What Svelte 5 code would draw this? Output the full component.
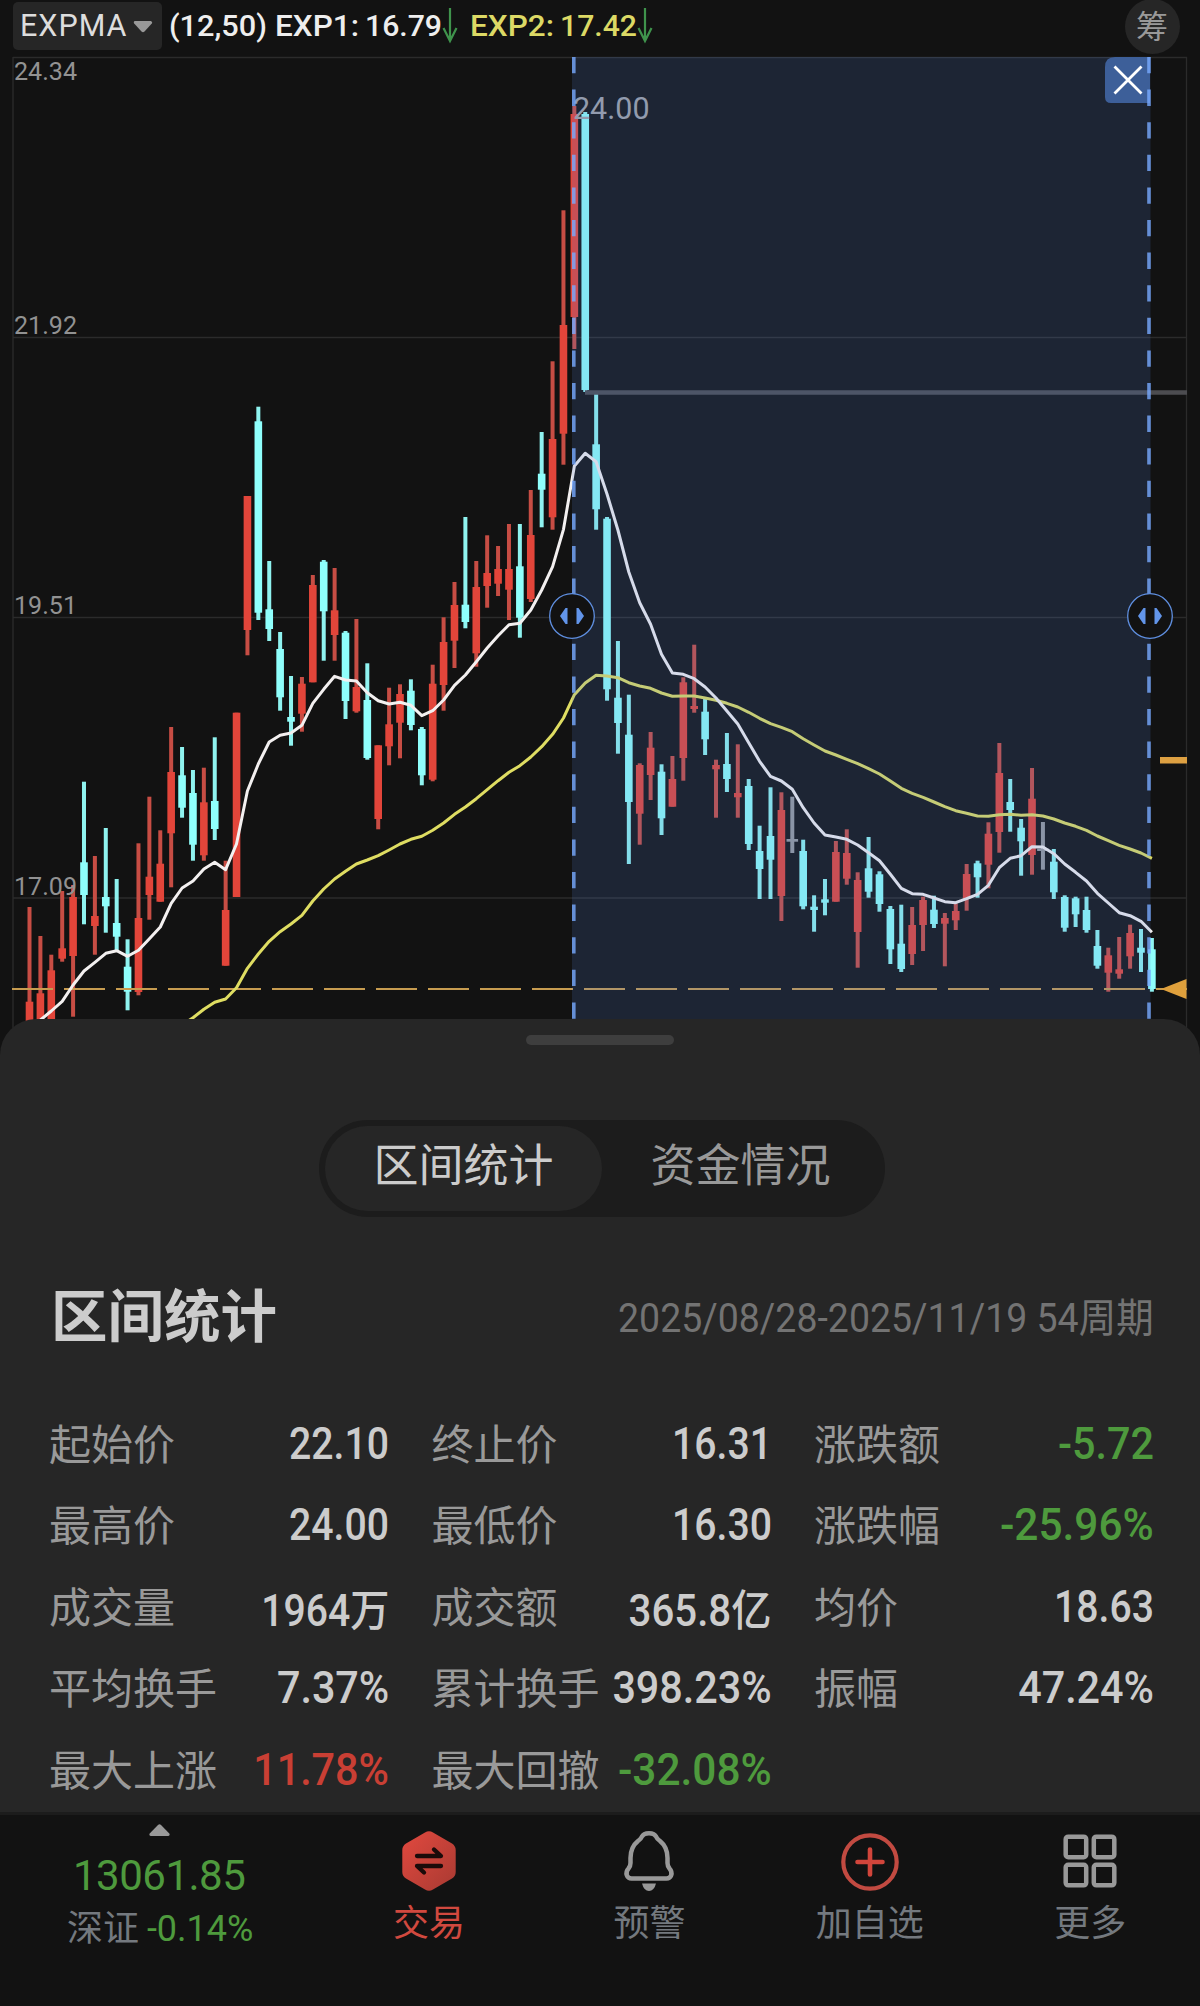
<script>
  // Candles: [kind, high, bodyTop, bodyBottom, low] in chart pixels.
  const candles = [
    ['r',907,1001.7,1040,1040],['r',936,993.3,1040,1040],['r',954.7,970.3,1040,1040],['r',891,948.3,958.7,961.7],['r',885,897,956,1016.7],
    ['c',781.7,862.3,895,924.3],['r',856,916,926,954.7],['c',828,897,906.3,932.7],['c',879,923,936.7,951],['c',939.3,966.7,991.7,1010.3],
    ['r',843.3,918,992,995.3],['r',796.7,876.7,895,919.7],['r',830.3,863.7,901.7,901.7],['r',727,772,833.3,887.3],['c',747,775.3,807.7,817.7],
    ['c',770,793,844.7,860.7],['r',767.7,802.3,855.3,860.7],['c',737.3,801,829,840],['r',860.7,910,965.7,965.7],['r',712.7,712.7,897,897],
    ['r',496,496,630,655.3],['c',406.7,421.3,612.7,620],['c',561,609.3,629,641],['c',632,649,697.3,710.7],['c',676,717,721.7,745.7],
    ['r',677,683.7,713.7,731.7],['r',575,585,682.3,682.3],['c',560,561.7,611.3,660.7],['r',568,610.3,635,660.7],['c',631,632.7,701,719],
    ['r',619,687,711.3,712.7],['c',663.3,700,758,759.7],['r',745.3,745.3,819,829.3],['r',687.7,724.3,746.3,765.3],['r',684.3,694,722.7,758.3],
    ['c',679.3,690.7,725,730.3],['c',727,729,775.3,785.3],['r',664.7,683.7,779.7,781.3],['r',617.3,642,685,710.7],['r',582,605,640.7,668],
    ['c',517,604.7,622,628.3],['r',561,587,653.3,666.7],['r',535.3,573,586,607.7],['r',546,569,583.7,596],['r',524,569,589.7,620],
    ['c',524,566.3,617.7,637.7],['r',490,535,599,602],['c',432,473.7,489.7,527.3],['r',361.3,439,517.3,529.7],['r',210.3,325,433.7,464.7],
    ['r',106,114,317,349],['c',112,114,390,392],['c',392.7,444.3,509.3,529.7],['c',517,518.7,689.3,700.7],['c',641,697.7,723,753.7],
    ['c',694.7,734.7,802,864],['r',763.3,765,813.7,844.7],['r',732,747.7,775,800],['c',764.3,771.7,818.3,835],['r',756,779,806.7,806.7],
    ['r',677.3,682.3,758,780.7],['r',644.7,706,709,712.7],['c',699,711.7,739.3,755],['r',759.7,765,769.3,817.7],['c',733,764,779,792],
    ['r',744.3,793,797.3,817.7],['c',779,786,844,850],['c',825.7,851,869,899],['c',787.3,836,859.7,899],['r',792.3,810,896,921],
    ['g',796.7,839,841.7,853],['c',839.7,851,906.3,909.3],['c',895.3,906.7,910,931.7],['c',879,899.3,902.7,915.3],['r',841,852,901.7,901.7],
    ['r',829.3,853,878.7,884.7],['r',872.3,880,932,967.7],['c',837,868.3,891.7,897.7],['c',871.3,874.3,904,911.7],['c',906,909,949.3,964],
    ['c',904.7,943.7,969,972],['r',907,925,954,965],['r',896.7,900,925,951],['c',895.7,909.7,924,928],['r',913,918,923.7,966.3],
    ['r',903.3,911,920.3,930],['r',864,874,899,910.7],['c',860.7,863.3,877.3,897.7],['r',822.3,833.7,864.7,888.3],['r',743,773,832,852.7],
    ['c',779,802,810,831.7],['c',819,827.7,841.3,875.7],['r',768,798.7,855,874.7],['g',822,848.7,851,869.7],['c',849,861.7,892.3,899],
    ['c',895.3,897,927.7,931.7],['c',896.7,898.3,914.3,927],['c',896.7,910,930,932.7],['c',930,946,965.7,968.7],['r',947.7,955.3,972.7,991.7],
    ['r',937,969.3,973.7,978.7],['r',924.7,933,956.3,968.7],['c',929,947.7,952.7,972],['c',938,949.3,989,991.7]
  ];
  const exp1 = [1028,1020,1011,1001.3,985,971,962.3,953.3,950.7,956.3,950.3,938.7,927,903.3,888,881,869,862.3,869.7,844,791,764,742,735.3,733,725.3,703.3,689.3,676.3,680,681,692.7,700.7,704,702.3,705.3,715.7,710.7,700,685.3,675,661.7,648,635.7,624.7,623.3,610,590,566.7,529.3,466,453.3,461.7,494,530,572,602.7,624.3,654.3,673,674.3,678.7,687,698,711,724,742.7,761.3,776.3,781,789.3,807.7,823,835,837,839.3,845,852.7,860.7,874.3,888.3,893.7,894.3,898,901.7,902.7,898.7,894.3,885.3,867.7,858.3,855.7,846.7,847,853.7,864,872.3,881,893.3,903,912.7,915.7,921.3,932.3];
  const exp2 = [1025,1017.7,1009.3,1002.3,999,987.7,968.3,954,941.3,931.7,924,915.3,901,889,879,871.3,864,860,855.7,850,844,839.3,836.3,830.3,823,814.3,807,798.7,789.7,780.7,772.3,765.7,757,746.7,734.3,718,694.7,683,675.3,676,677.7,682.7,686,688.3,693,696.3,696,696,698,700.3,703.3,707,712.3,718.3,723.7,727.3,731.7,738.7,745,751,755,759.3,763.7,768.7,774,781,788.3,793.3,797.3,802,806.7,810.7,813.3,816,816.3,814.7,814.3,815.3,814.7,816,819,823,826.3,830.3,836,840.7,845.3,849,853,858.3];
  const cx = (i) => 29.5 + i * 10.897;
  const line = (ys, from) => ys.map((y, i) => `${cx(i + from).toFixed(1)},${y}`).join(' ');
  const axis = [['24.34', 79.8], ['21.92', 333.5], ['19.51', 613.5], ['17.09', 894.5]];
  const grid = [57.5, 337.5, 617.5, 898];
  const handles = [572, 1150];

  const stats = [
    ['起始价','22.10',''],['终止价','16.31',''],['涨跌额','-5.72','down pct'],
    ['最高价','24.00',''],['最低价','16.30',''],['涨跌幅','-25.96%','down neg'],
    ['成交量','1964万',''],['成交额','365.8亿','unit'],['均价','18.63',''],
    ['平均换手','7.37%','pct'],['累计换手','398.23%','pct'],['振幅','47.24%','pct'],
    ['最大上涨','11.78%','up pct'],['最大回撤','-32.08%','down neg']
  ];
</script>

<div class="app">
  <section class="chart">
    <header>
      <div class="select">
        <span>EXPMA</span>
        <svg width="20" height="13" viewBox="0 0 20 13"><path d="M2 1h16q2 1 .8 2.600L11.500 11.500q-1.500 1.500-3 0L1.200 3.600Q0 1.500 2 1z" fill="#999"/></svg>
      </div>
      <svg class="legend" width="500" height="52" viewBox="165 0 500 52">
        <g class="ind">
          <text x="169" y="36" textLength="98" lengthAdjust="spacingAndGlyphs">(12,50)</text>
          <text x="275" y="36" textLength="84" lengthAdjust="spacingAndGlyphs">EXP1:</text>
          <text x="365" y="36" textLength="77" lengthAdjust="spacingAndGlyphs">16.79</text>
          <g class="yellow">
            <text x="470" y="36" textLength="84" lengthAdjust="spacingAndGlyphs">EXP2:</text>
            <text x="560" y="36" textLength="77" lengthAdjust="spacingAndGlyphs">17.42</text>
          </g>
        </g>
        <path class="arrow" d="M450 8v33M443.500 28l6.500 13 6.500-13M645 8v33M638.500 28l6.500 13 6.500-13"/>
      </svg>
      <div class="chip">筹</div>
    </header>

    <svg class="plot" width="1200" height="984" viewBox="0 52 1200 984">
      <g class="grid">
        {#each grid as y}<line x1="13" x2="1187" y1={y} y2={y}/>{/each}
        <path d="M13 57V1036M1186.500 57V1036"/>
      </g>
      {#each candles as [k, hi, top, bot, lo], i}
        <rect class="wick {k}" x={cx(i) - 2} y={hi} width="4" height={lo - hi}/>
        <rect class="body {k}" x={cx(i) - (k === 'g' ? 5.8 : 3.8)} y={top} width={k === 'g' ? 11.6 : 7.6} height={bot - top}/>
      {/each}
      <line x1="585" x2="1187" y1="392.500" y2="392.500" stroke="#4c4c50" stroke-width="4.500"/>
      <line x1="12" x2="1187" y1="989" y2="989" stroke="#c79c50" stroke-width="2.200" stroke-dasharray="41 11"/>
      <polyline class="exp yl" points={line(exp2, 14)}/>
      <polyline class="exp" points={line(exp1, 0)}/>
      {#each axis as [t, y]}
        <text class="axis" x="14" {y} textLength="63" lengthAdjust="spacingAndGlyphs">{t}</text>
      {/each}
      <text class="peak" x="573" y="119" textLength="76.500" lengthAdjust="spacingAndGlyphs">24.00</text>
      <rect x="572" y="57" width="578.500" height="979" fill="rgb(83,127,212)" fill-opacity=".18"/>
      <path d="M1115 57h35v46h-39q-6 0-6-6V67q0-10 10-10z" fill="#3d5f99"/>
      <path d="M1114.500 66.500l27 27M1141.500 66.500l-27 27" stroke="#fff" stroke-width="2.800"/>
      <path d="M573.800 57V1036M1149 57V1036" stroke="#78aaff" stroke-opacity=".8" stroke-width="3.600" stroke-dasharray="16.300 16.300"/>
      {#each handles as x}
        <circle cx={x} cy="616" r="22.300" fill="#121212" stroke="#5f8fe0" stroke-width="1.300"/>
        <path d="M{x - 4.5} 608v16h-2l-5.500-8 5.500-8zM{x + 4.5} 608v16h2l5.500-8-5.500-8z" fill="#6295ea"/>
      {/each}
      <rect x="1160" y="757" width="27" height="6.500" fill="#dda042"/>
      <path d="M1161 989l25.500-10v20z" fill="#dfa03c"/>
    </svg>
  </section>

  <section class="sheet">
    <div class="grip"></div>
    <div class="tabs">
      <div class="tab on">区间统计</div>
      <div class="tab">资金情况</div>
    </div>
    <div class="head">
      <h1>区间统计</h1>
      <p>2025/08/28-2025/11/19 54周期</p>
    </div>
    <div class="stats">
      {#each stats as [k, v, c]}
        <div class="stat"><span>{k}</span><b class={c}>{v}</b></div>
      {/each}
    </div>
  </section>

  <nav>
    <div class="index">
      <svg width="21" height="12" viewBox="0 0 21 12"><path d="M9 1q1.500-1.500 3 0l8.300 8.500q1 2-1 2.500H1.700q-2-.5-1-2.500z" fill="#999"/></svg>
      <strong>13061.85</strong>
      <div class="sub"><span>深证</span><em>-0.14%</em></div>
    </div>
    <div class="item red">
      <svg width="60" height="62" viewBox="-30 -31 60 62">
        <defs><linearGradient id="hex" x1="0" y1="0" x2="1" y2="1"><stop offset="0" stop-color="#e2493f"/><stop offset="1" stop-color="#a83a32"/></linearGradient></defs>
        <path d="M-4-28.500q4-2.500 8 0L23-17.500q3.700 2.500 3.700 6.500v22q0 4-3.700 6.500L4 28.500q-4 2.500-8 0L-23 17.500q-3.700-2.500-3.700-6.500v-22q0-4 3.700-6.500z" fill="url(#hex)"/>
        <path d="M-12-5H12L5-11.500M12 5H-12L-5 11.500" fill="none" stroke="#1b0b0a" stroke-width="4.300" stroke-linecap="round" stroke-linejoin="round"/>
      </svg>
      <span>交易</span>
    </div>
    <div class="item">
      <svg width="60" height="62" viewBox="-30 -31 60 62">
        <path d="M-7-24.500C-5-29 5-29 7-24.500Q8-22 11-20C16-16 18.500-10 18.500-3V2Q18.500 5 20.500 7.500C24.500 12 22 17.500 17.500 17.500H-17.500C-22 17.500-24.500 12-20.500 7.500Q-18.500 5-18.500 2V-3C-18.500-10-16-16-11-20Q-8-22-7-24.500z" fill="none" stroke="#999" stroke-width="4.500"/>
        <path d="M-7 22.500H7Q5 30 0 30T-7 22.500z" fill="#999"/>
      </svg>
      <span>预警</span>
    </div>
    <div class="item">
      <svg width="60" height="62" viewBox="-30 -31 60 62">
        <circle cx="0" cy="1" r="26.700" fill="none" stroke="#c24a41" stroke-width="4.200"/>
        <path d="M-12.500 1h25M0-11.500v25" stroke="#d2453b" stroke-width="4.600" stroke-linecap="round"/>
      </svg>
      <span>加自选</span>
    </div>
    <div class="item">
      <svg width="60" height="62" viewBox="-30 -31 60 62">
        <g fill="none" stroke="#999" stroke-width="4.500">
          <rect x="-24.300" y="-24.300" width="20.500" height="20.500" rx="2.500"/><rect x="3.800" y="-24.300" width="20.500" height="20.500" rx="2.500"/>
          <rect x="-24.300" y="3.800" width="20.500" height="20.500" rx="2.500"/><rect x="3.800" y="3.800" width="20.500" height="20.500" rx="2.500"/>
        </g>
      </svg>
      <span>更多</span>
    </div>
  </nav>
</div>

<style>
  :global(body) { margin: 0; background: #121212; }
  .app { width: 1200px; height: 2006px; display: flex; flex-direction: column; background: #121212; font-family: Roboto, "Noto Sans CJK SC", sans-serif; color: #ccc; overflow: hidden; }
  .chart { height: 1019px; flex: none; }
  header { height: 52px; display: flex; align-items: flex-start; padding-left: 13px; box-sizing: border-box; }
  .select { width: 149px; height: 48px; margin-top: 2px; box-sizing: border-box; padding: 0 9px 0 7px; background: #262626; border-radius: 5px; display: flex; align-items: center; justify-content: space-between; font-size: 30.500px; letter-spacing: 1px; line-height: 48px; color: #ddd; }
  .legend { display: block; margin-left: 3px; }
  .ind { font-size: 30px; font-weight: 500; fill: #eee; }
  .yellow { fill: #dcd965; }
  .arrow { fill: none; stroke: #3f934c; stroke-width: 2.200; }
  .chip { width: 55px; height: 55px; margin: -1.500px 0 0 459.500px; border-radius: 50%; background: #262626; color: #999; font-size: 32px; line-height: 57px; text-align: center; }
  .plot { display: block; }
  .grid { stroke: #2b2b2b; stroke-width: 1.300; fill: none; }
  .body.r { fill: #e2453a; } .wick.r { fill: #c74d44; }
  .body.c { fill: #8ffffc; } .wick.c { fill: #8ff3f0; }
  .body.g, .wick.g { fill: #97999d; }
  .exp { fill: none; stroke: #f3f0f0; stroke-width: 3; stroke-linejoin: round; }
  .exp.yl { stroke: #dfdd62; }
  .axis { font-size: 26.500px; fill: #929292; }
  .peak { font-size: 31.500px; fill: #a0a2a6; }
  .sheet { position: relative; height: 796px; flex: none; box-sizing: border-box; border-bottom: 3px solid #1c1c1c; background: #262626; border-radius: 36px 36px 0 0; padding-top: 16px; }
  .grip { width: 148px; height: 10px; margin: 0 auto; border-radius: 5px; background: #3e3e3e; }
  .tabs { display: flex; width: 566px; height: 97px; margin: 75px 0 0 319px; padding: 6px; box-sizing: border-box; border-radius: 49px; background: #1c1c1c; }
  .tab { flex: 1; border-radius: 43px; text-align: center; font-size: 45px; line-height: 82px; color: #999; }
  .tab.on { background: #262626; color: #ccc; }
  .head { display: flex; justify-content: space-between; align-items: center; height: 80px; margin: 58px 46px 0 51px; }
  h1 { margin: 0; font-size: 56.500px; line-height: 80px; padding-top: 6px; font-weight: 700; color: #ccc; }
  p { margin: 0; font-size: 40px; color: #737373; transform: scaleX(.937); transform-origin: right; white-space: nowrap; }
  .stats { display: grid; grid-template-columns: repeat(3, 340px); column-gap: 42.500px; grid-auto-rows: 81.500px; margin: 47px 0 0 49px; }
  .stat { display: flex; justify-content: space-between; align-items: center; white-space: nowrap; }
  .stat span { font-size: 42px; color: #999; padding-bottom: 3px; }
  .stat b { font-size: 43.500px; font-weight: 500; color: #ccc; padding-top: 3px; transform: scaleX(.9); transform-origin: right; }
  .stat b.unit { transform: scaleX(.925); }
  .stat b.pct { transform: scaleX(.95); }
  .stat b.neg { transform: scaleX(.975); }
  .stat b.down { color: #4e9a3d; } .stat b.up { color: #c93f34; }
  nav { display: flex; height: 191px; }
  .index { width: 318.500px; display: flex; flex-direction: column; align-items: center; padding-top: 9px; box-sizing: border-box; }
  .index svg { display: block; }
  strong { font-size: 42px; line-height: 50px; margin-top: 15px; font-weight: 400; letter-spacing: -.5px; color: #4e9a3d; }
  .sub { display: flex; align-items: baseline; gap: 8px; padding-left: 2px; font-size: 36px; line-height: 50px; margin-top: 3px; }
  .sub span { color: #74797f; } .sub em { font-style: normal; color: #4e9a3d; }
  .item { width: 220.500px; display: flex; flex-direction: column; align-items: center; padding: 15px 0 0 1px; box-sizing: border-box; font-size: 36px; line-height: 50px; color: #74797f; }
  .item svg { display: block; }
  .item span { margin-top: 6.500px; }
  .item.red { color: #d1493f; }
</style>
